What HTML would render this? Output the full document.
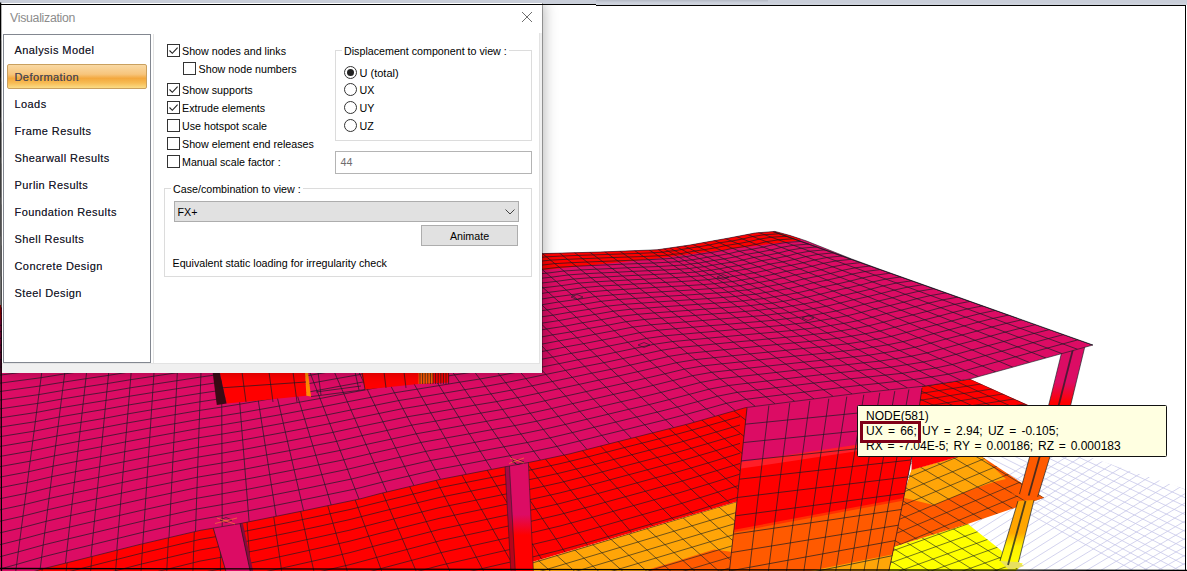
<!DOCTYPE html>
<html lang="en"><head><meta charset="utf-8"><title>Visualization</title>
<style>
html,body{margin:0;padding:0}
body{width:1187px;height:571px;overflow:hidden;position:relative;background:#fff;font-family:"Liberation Sans",sans-serif;}
.abs{position:absolute}
#dlg{position:absolute;left:2px;top:3px;width:540px;height:370px;background:#fff;box-sizing:content-box;box-shadow:1px 0 0 rgba(0,0,0,.32),3px 0 12px rgba(0,0,0,.26);}
#dlg .client{position:absolute;left:0;top:30px;width:540px;height:340px;background:#f0f0f0}
#dlg .inner{position:absolute;left:0;top:0;width:537px;height:330px;background:#fff;border-right:1px solid #e3e3e3;border-bottom:1px solid #e3e3e3}
.title{position:absolute;left:8px;top:8px;font-size:12.3px;letter-spacing:-.28px;line-height:14px;color:#8c8c8c;white-space:pre}
.close{position:absolute;left:519px;top:8px}
.list{position:absolute;left:1px;top:31px;width:146px;height:327px;border:1px solid #828790;background:#fff}
.split{position:absolute;left:150.5px;top:1px;width:1px;height:329px;background:#e4e4e4}
.item{position:absolute;left:10.5px;font-size:11px;letter-spacing:.42px;color:#1a1a2a;white-space:pre;line-height:13px;text-shadow:0 0 .3px rgba(20,20,40,.55)}
.sel{position:absolute;left:3px;top:29px;width:137.5px;height:23px;border:1px solid #c9a05f;border-radius:2px;background:linear-gradient(#f9d9a4 0%,#f7c57c 40%,#f3a83e 58%,#f7bc55 78%,#fbdc86 100%)}
.lbl{position:absolute;margin-top:1px;margin-left:-1px;font-size:10.7px;line-height:13px;color:#000;white-space:pre}
.cb{position:absolute;width:11px;height:11px;border:1px solid #333;background:#fff}
.rb{position:absolute;width:11px;height:11px;border:1px solid #333;border-radius:50%;background:#fff}
.grp{position:absolute;border:1px solid #dcdcdc}
.grp .cap{position:absolute;top:-6px;background:#fff;padding:0 2px;font-size:10.7px;line-height:13px;white-space:pre}
#tip{position:absolute;left:857px;top:405px;width:308px;height:50px;background:#ffffe1;border:1px solid #111;border-radius:1.5px;font-size:12px;line-height:15.3px;color:#000;white-space:pre;word-spacing:1.5px}
#tip div{position:absolute;left:8px}
#hl{position:absolute;left:860px;top:421px;width:55px;height:15.5px;border:3px solid #800018}
</style></head>
<body>
<svg width="1187" height="571" viewBox="0 0 1187 571" style="position:absolute;left:0;top:0"><defs><clipPath id="c1"><polygon points="880.0,387.5 1089.5,457.3 1187.0,489.8 1187.0,575.0 880.0,575.0"/></clipPath><clipPath id="c2"><polygon points="885.0,575.0 893.8,546.7 967.5,523.8 1001.0,550.3 1006.0,560.0 1022.8,563.6 1012.0,575.0"/></clipPath><clipPath id="c3"><polygon points="911.5,470.0 961.0,456.0 981.0,456.0 1044.0,497.8 968.3,523.8 893.8,546.7 903.0,497.0 912.0,456.0"/></clipPath><clipPath id="c4"><polygon points="915.0,387.0 970.0,379.0 1028.0,405.0 1040.0,412.0 910.0,412.0"/></clipPath><clipPath id="c5"><polygon points="500.0,575.0 532.0,562.0 737.0,501.6 755.0,490.0 745.0,575.0"/></clipPath><clipPath id="c6"><polygon points="-5.0,575.0 -5.0,400.0 760.0,400.0 752.0,501.6 737.0,501.6 532.0,562.0 500.0,575.0"/></clipPath><linearGradient id="gc2" x1="0" y1="0" x2="0" y2="1"><stop offset="0" stop-color="#dc0c64"/><stop offset="0.47" stop-color="#dc0c64"/><stop offset="0.65" stop-color="#ff0000"/><stop offset="1" stop-color="#ff0000"/></linearGradient><clipPath id="cwall"><polygon points="747.0,408.0 749.0,392.0 923.0,374.0 922.0,388.0 912.0,456.0 893.8,547.8 888.0,575.0 729.0,575.0"/></clipPath><linearGradient id="gcr1" x1="0" y1="0" x2="0" y2="1"><stop offset="0" stop-color="#dc0c64"/><stop offset="0.55" stop-color="#dc0c64"/><stop offset="0.85" stop-color="#ff0000"/><stop offset="1" stop-color="#ff0000"/></linearGradient><linearGradient id="gcr3" x1="0" y1="0" x2="0" y2="1"><stop offset="0" stop-color="#ffa000"/><stop offset="0.5" stop-color="#ffa800"/><stop offset="0.7" stop-color="#fff000"/><stop offset="1" stop-color="#ffff00"/></linearGradient><clipPath id="c7"><polygon points="-60.0,314.0 543.0,253.6 600.0,252.0 657.0,249.8 690.0,245.0 729.0,238.0 755.0,233.0 775.0,231.4 790.0,235.5 806.0,240.8 851.7,259.0 880.0,269.3 1093.0,345.0 970.0,379.0 935.0,384.5 925.0,386.0 860.0,393.0 745.7,407.6 688.0,424.0 614.0,442.6 570.0,453.8 540.0,460.2 528.0,462.6 505.0,466.8 470.0,473.6 440.0,479.4 380.0,493.6 360.0,498.9 300.0,511.5 240.0,523.6 200.0,530.4 140.0,544.4 80.0,559.5 44.0,568.5 -5.0,583.0 -60.0,598.0"/></clipPath><clipPath id="c8"><polygon points="-60.0,314.0 543.0,253.6 600.0,252.0 657.0,249.8 690.0,245.0 729.0,238.0 755.0,233.0 775.0,231.4 790.0,235.5 806.0,240.8 851.7,259.0 880.0,269.3 1093.0,345.0 970.0,379.0 935.0,384.5 925.0,386.0 860.0,393.0 745.7,407.6 688.0,424.0 614.0,442.6 570.0,453.8 540.0,460.2 528.0,462.6 505.0,466.8 470.0,473.6 440.0,479.4 380.0,493.6 360.0,498.9 300.0,511.5 240.0,523.6 200.0,530.4 140.0,544.4 80.0,559.5 44.0,568.5 -5.0,583.0 -60.0,598.0"/></clipPath></defs><rect width="1187" height="571" fill="#fff"/><g clip-path="url(#c1)"><path d="M880.0 255.8L1190.0 356.5M880.0 261.9L1190.0 365.0M880.0 268.0L1190.0 373.4M880.0 274.1L1190.0 381.8M880.0 280.2L1190.0 390.3M880.0 286.3L1190.0 398.7M880.0 292.5L1190.0 407.2M880.0 298.6L1190.0 415.6M880.0 304.7L1190.0 424.0M880.0 310.8L1190.0 432.5M880.0 316.9L1190.0 440.9M880.0 323.0L1190.0 449.3M880.0 329.1L1190.0 457.8M880.0 335.2L1190.0 466.2M880.0 341.4L1190.0 474.6M880.0 347.5L1190.0 483.1M880.0 353.6L1190.0 491.5M880.0 359.7L1190.0 500.0M880.0 365.8L1190.0 508.4M880.0 371.9L1190.0 516.8M880.0 378.0L1190.0 525.3M880.0 384.1L1190.0 533.7M880.0 390.3L1190.0 542.2M880.0 396.4L1190.0 550.6M880.0 402.5L1190.0 559.0M880.0 408.6L1190.0 567.5M880.0 414.7L1190.0 575.9M880.0 420.8L1190.0 584.3M880.0 426.9L1190.0 592.8M880.0 433.0L1190.0 601.2M860.0 569.0L1160.0 380.0M860.0 569.0L844.1 579.0M874.3 569.0L1174.3 380.0M874.3 569.0L858.4 579.0M888.6 569.0L1188.6 380.0M888.6 569.0L872.7 579.0M902.9 569.0L1202.9 380.0M902.9 569.0L887.0 579.0M917.2 569.0L1217.2 380.0M917.2 569.0L901.3 579.0M931.5 569.0L1231.5 380.0M931.5 569.0L915.6 579.0M945.8 569.0L1245.8 380.0M945.8 569.0L929.9 579.0M960.1 569.0L1260.1 380.0M960.1 569.0L944.2 579.0M974.4 569.0L1274.4 380.0M974.4 569.0L958.5 579.0M988.7 569.0L1288.7 380.0M988.7 569.0L972.8 579.0M1003.0 569.0L1303.6 380.0M1003.0 569.0L987.1 579.0M1017.3 569.0L1320.9 380.0M1017.3 569.0L1001.2 579.0M1031.6 569.0L1338.3 380.0M1031.6 569.0L1015.4 579.0M1045.9 569.0L1355.7 380.0M1045.9 569.0L1029.5 579.0M1060.2 569.0L1373.2 380.0M1060.2 569.0L1043.6 579.0M1074.5 569.0L1390.7 380.0M1074.5 569.0L1057.8 579.0M1088.8 569.0L1408.3 380.0M1088.8 569.0L1071.9 579.0M1103.1 569.0L1426.0 380.0M1103.1 569.0L1086.0 579.0M1117.4 569.0L1443.8 380.0M1117.4 569.0L1100.1 579.0M1131.7 569.0L1461.6 380.0M1131.7 569.0L1114.2 579.0M1146.0 569.0L1479.5 380.0M1146.0 569.0L1128.4 579.0M1160.3 569.0L1497.5 380.0M1160.3 569.0L1142.5 579.0M1174.6 569.0L1515.5 380.0M1174.6 569.0L1156.6 579.0M1188.9 569.0L1533.7 380.0M1188.9 569.0L1170.7 579.0M1203.2 569.0L1551.9 380.0M1203.2 569.0L1184.7 579.0M1217.5 569.0L1570.3 380.0M1217.5 569.0L1198.8 579.0M1231.8 569.0L1588.7 380.0M1231.8 569.0L1212.9 579.0M1246.1 569.0L1607.2 380.0M1246.1 569.0L1227.0 579.0M1260.4 569.0L1625.9 380.0M1260.4 569.0L1241.1 579.0M1274.7 569.0L1644.6 380.0M1274.7 569.0L1255.1 579.0M1289.0 569.0L1663.4 380.0M1289.0 569.0L1269.2 579.0M1303.3 569.0L1681.3 380.0M1303.3 569.0L1283.3 579.0M1317.6 569.0L1695.6 380.0M1317.6 569.0L1297.6 579.0M1331.9 569.0L1709.9 380.0M1331.9 569.0L1311.9 579.0M1346.2 569.0L1724.2 380.0M1346.2 569.0L1326.2 579.0M1360.5 569.0L1738.5 380.0M1360.5 569.0L1340.5 579.0M1374.8 569.0L1752.8 380.0M1374.8 569.0L1354.8 579.0M1389.1 569.0L1767.1 380.0M1389.1 569.0L1369.1 579.0M1403.4 569.0L1781.4 380.0M1403.4 569.0L1383.4 579.0M1417.7 569.0L1795.7 380.0M1417.7 569.0L1397.7 579.0M1432.0 569.0L1810.0 380.0M1432.0 569.0L1412.0 579.0M1446.3 569.0L1824.3 380.0M1446.3 569.0L1426.3 579.0M1460.6 569.0L1838.6 380.0M1460.6 569.0L1440.6 579.0M1474.9 569.0L1852.9 380.0M1474.9 569.0L1454.9 579.0M1489.2 569.0L1867.2 380.0M1489.2 569.0L1469.2 579.0" fill="none" stroke="#c8c8ea" stroke-width="1" stroke-opacity="0.8" /></g><polygon points="885.0,575.0 893.8,546.7 967.5,523.8 1001.0,550.3 1006.0,560.0 1022.8,563.6 1012.0,575.0" fill="#ffff00" /><g clip-path="url(#c2)"><path d="M1371.8 220.5L242.2 625.5M1383.3 227.7L253.7 632.7M1394.8 234.9L265.2 639.9M1406.3 242.1L276.7 647.1M1417.8 249.3L288.2 654.3M1429.3 256.5L299.7 661.5M1440.8 263.7L311.2 668.7M1452.3 270.9L322.7 675.9M1463.8 278.1L334.2 683.1M1475.3 285.3L345.7 690.3M1486.8 292.5L357.2 697.5M1498.3 299.7L368.7 704.7M1509.8 306.9L380.2 711.9M1521.3 314.1L391.7 719.1M1532.8 321.3L403.2 726.3M1544.3 328.5L414.7 733.5M1555.8 335.7L426.2 740.7M1567.3 342.9L437.7 747.9M1578.8 350.1L449.2 755.1M1590.3 357.3L460.7 762.3M1601.8 364.5L472.2 769.5M1613.3 371.7L483.7 776.7M1624.8 378.9L495.2 783.9M1636.3 386.1L506.7 791.1M1647.8 393.3L518.2 798.3M1659.3 400.5L529.7 805.5M1670.8 407.7L541.2 812.7M1682.3 414.9L552.7 819.9M1693.8 422.1L564.2 827.1M662.4 132.6L1679.6 769.4M647.9 137.8L1665.1 774.6M633.4 143.0L1650.6 779.8M618.9 148.2L1636.1 785.0M604.4 153.4L1621.6 790.2M589.9 158.6L1607.1 795.4M575.4 163.8L1592.6 800.6M560.9 169.0L1578.1 805.8M546.4 174.2L1563.6 811.0M531.9 179.4L1549.1 816.2M517.4 184.6L1534.6 821.4M502.9 189.8L1520.1 826.6M488.4 195.0L1505.6 831.8M473.9 200.2L1491.1 837.0M459.4 205.4L1476.6 842.2M444.9 210.6L1462.1 847.4M430.4 215.8L1447.6 852.6M415.9 221.0L1433.1 857.8M401.4 226.2L1418.6 863.0M386.9 231.4L1404.1 868.2M372.4 236.6L1389.6 873.4M357.9 241.8L1375.1 878.6M343.4 247.0L1360.6 883.8M328.9 252.2L1346.1 889.0M314.4 257.4L1331.6 894.2M299.9 262.6L1317.1 899.4M285.4 267.8L1302.6 904.6M270.9 273.0L1288.1 909.8M256.4 278.2L1273.6 915.0" fill="none" stroke="#121e24" stroke-width="0.85" stroke-opacity="0.7" /></g><polygon points="911.5,470.0 961.0,456.0 981.0,456.0 1044.0,497.8 968.3,523.8 893.8,546.7 903.0,497.0" fill="#ff5a00" /><polygon points="911.5,470.0 961.0,456.0 981.0,456.0 1006.0,478.9 993.5,482.0 968.3,490.7 933.6,505.0 903.6,497.8" fill="#ffa508" /><polygon points="912.0,456.0 961.0,456.0 911.5,470.0" fill="#ff0000" /><g clip-path="url(#c3)"><path d="M1773.4 374.8L664.6 833.6M1760.9 367.2L652.1 826.0M1748.4 359.6L639.6 818.4M1735.9 352.0L627.1 810.8M1723.4 344.4L614.6 803.2M1710.9 336.8L602.1 795.6M1698.4 329.2L589.6 788.0M1685.9 321.6L577.1 780.4M1673.4 314.0L564.6 772.8M1660.9 306.4L552.1 765.2M1648.4 298.8L539.6 757.6M1635.9 291.2L527.1 750.0M1623.4 283.6L514.6 742.4M1610.9 276.0L502.1 734.8M1598.4 268.4L489.6 727.2M1585.9 260.8L477.1 719.6M1573.4 253.2L464.6 712.0M1560.9 245.6L452.1 704.4M1548.4 238.0L439.6 696.8M1535.9 230.4L427.1 689.2M1523.4 222.8L414.6 681.6M1510.9 215.2L402.1 674.0M1498.4 207.6L389.6 666.4M1485.9 200.0L377.1 658.8M1473.4 192.4L364.6 651.2M1460.9 184.8L352.1 643.6M1448.4 177.2L339.6 636.0M1435.9 169.6L327.1 628.4M1423.4 162.0L314.6 620.8M1759.7 725.5L734.3 102.1M1745.2 731.5L719.8 108.1M1730.7 737.5L705.3 114.1M1716.2 743.5L690.8 120.1M1701.7 749.5L676.3 126.1M1687.2 755.5L661.8 132.1M1672.7 761.5L647.3 138.1M1658.2 767.5L632.8 144.1M1643.7 773.5L618.3 150.1M1629.2 779.5L603.8 156.1M1614.7 785.5L589.3 162.1M1600.2 791.5L574.8 168.1M1585.7 797.5L560.3 174.1M1571.2 803.5L545.8 180.1M1556.7 809.5L531.3 186.1M1542.2 815.5L516.8 192.1M1527.7 821.5L502.3 198.1M1513.2 827.5L487.8 204.1M1498.7 833.5L473.3 210.1M1484.2 839.5L458.8 216.1M1469.7 845.5L444.3 222.1M1455.2 851.5L429.8 228.1M1440.7 857.5L415.3 234.1M1426.2 863.5L400.8 240.1M1411.7 869.5L386.3 246.1M1397.2 875.5L371.8 252.1M1382.7 881.5L357.3 258.1M1368.2 887.5L342.8 264.1M1353.7 893.5L328.3 270.1" fill="none" stroke="#121e24" stroke-width="0.85" stroke-opacity="0.7" /></g><polygon points="915.0,387.0 970.0,379.0 1028.0,405.0 1040.0,412.0 910.0,412.0" fill="#ff0000" /><g clip-path="url(#c4)"><path d="M1452.7 235.9L267.3 422.1M1463.7 240.9L278.3 427.1M1474.7 245.9L289.3 432.1M1485.7 250.9L300.3 437.1M1496.7 255.9L311.3 442.1M1507.7 260.9L322.3 447.1M1518.7 265.9L333.3 452.1M1529.7 270.9L344.3 457.1M1540.7 275.9L355.3 462.1M1551.7 280.9L366.3 467.1M1562.7 285.9L377.3 472.1M1573.7 290.9L388.3 477.1M1584.7 295.9L399.3 482.1M1595.7 300.9L410.3 487.1M1606.7 305.9L421.3 492.1M1617.7 310.9L432.3 497.1M1628.7 315.9L443.3 502.1M1639.7 320.9L454.3 507.1M1650.7 325.9L465.3 512.1M1661.7 330.9L476.3 517.1M1672.7 335.9L487.3 522.1M563.8 108.7L1656.2 605.3M549.8 110.9L1642.2 607.5M535.8 113.1L1628.2 609.7M521.8 115.3L1614.2 611.9M507.8 117.5L1600.2 614.1M493.8 119.7L1586.2 616.3M479.8 121.9L1572.2 618.5M465.8 124.1L1558.2 620.7M451.8 126.3L1544.2 622.9M437.8 128.5L1530.2 625.1M423.8 130.7L1516.2 627.3M409.8 132.9L1502.2 629.5M395.8 135.1L1488.2 631.7M381.8 137.3L1474.2 633.9M367.8 139.5L1460.2 636.1M353.8 141.7L1446.2 638.3M339.8 143.9L1432.2 640.5M325.8 146.1L1418.2 642.7M311.8 148.3L1404.2 644.9M297.8 150.5L1390.2 647.1M283.8 152.7L1376.2 649.3" fill="none" stroke="#121e24" stroke-width="0.85" stroke-opacity="0.7" /></g><polygon points="500.0,575.0 532.0,562.0 737.0,501.6 755.0,490.0 745.0,575.0" fill="#ffa508" /><polygon points="645.0,575.0 650.0,569.0 678.0,560.8 714.0,549.6 738.0,552.7 738.0,575.0" fill="#ff5a00" /><g clip-path="url(#c5)"><path d="M1527.7 521.2L378.3 866.0M1518.7 513.2L369.3 858.0M1509.7 505.2L360.3 850.0M1500.7 497.2L351.3 842.0M1491.7 489.2L342.3 834.0M1482.7 481.2L333.3 826.0M1473.7 473.2L324.3 818.0M1464.7 465.2L315.3 810.0M1455.7 457.2L306.3 802.0M1446.7 449.2L297.3 794.0M1437.7 441.2L288.3 786.0M1428.7 433.2L279.3 778.0M1419.7 425.2L270.3 770.0M1410.7 417.2L261.3 762.0M1401.7 409.2L252.3 754.0M1392.7 401.2L243.3 746.0M1383.7 393.2L234.3 738.0M1374.7 385.2L225.3 730.0M1365.7 377.2L216.3 722.0M1356.7 369.2L207.3 714.0M1347.7 361.2L198.3 706.0M1338.7 353.2L189.3 698.0M1329.7 345.2L180.3 690.0M1320.7 337.2L171.3 682.0M1311.7 329.2L162.3 674.0M1302.7 321.2L153.3 666.0M1293.7 313.2L144.3 658.0M1284.7 305.2L135.3 650.0M1275.7 297.2L126.3 642.0M1266.7 289.2L117.3 634.0M1257.7 281.2L108.3 626.0M1248.7 273.2L99.3 618.0M1239.7 265.2L90.3 610.0M1230.7 257.2L81.3 602.0M1221.7 249.2L72.3 594.0M1212.7 241.2L63.3 586.0M1203.7 233.2L54.3 578.0M1194.7 225.2L45.3 570.0M1185.7 217.2L36.3 562.0M1176.7 209.2L27.3 554.0M1167.7 201.2L18.3 546.0M1158.7 193.2L9.3 538.0M1149.7 185.2L0.3 530.0M1140.7 177.2L-8.7 522.0M1131.7 169.2L-17.7 514.0M1122.7 161.2L-26.7 506.0M1113.7 153.2L-35.7 498.0M1104.7 145.2L-44.7 490.0M1095.7 137.2L-53.7 482.0M1473.4 813.8L576.6 16.6M1455.4 819.2L558.6 22.0M1437.4 824.6L540.6 27.4M1419.4 830.0L522.6 32.8M1401.4 835.4L504.6 38.2M1383.4 840.8L486.6 43.6M1365.4 846.2L468.6 49.0M1347.4 851.6L450.6 54.4M1329.4 857.0L432.6 59.8M1311.4 862.4L414.6 65.2M1293.4 867.8L396.6 70.6M1275.4 873.2L378.6 76.0M1257.4 878.6L360.6 81.4M1239.4 884.0L342.6 86.8M1221.4 889.4L324.6 92.2M1203.4 894.8L306.6 97.6M1185.4 900.2L288.6 103.0M1167.4 905.6L270.6 108.4M1149.4 911.0L252.6 113.8M1131.4 916.4L234.6 119.2M1113.4 921.8L216.6 124.6M1095.4 927.2L198.6 130.0M1077.4 932.6L180.6 135.4M1059.4 938.0L162.6 140.8M1041.4 943.4L144.6 146.2M1023.4 948.8L126.6 151.6M1005.4 954.2L108.6 157.0M987.4 959.6L90.6 162.4M969.4 965.0L72.6 167.8M951.4 970.4L54.6 173.2M933.4 975.8L36.6 178.6M915.4 981.2L18.6 184.0M897.4 986.6L0.6 189.4" fill="none" stroke="#121e24" stroke-width="0.85" stroke-opacity="0.72" /></g><polygon points="-5.0,575.0 -5.0,400.0 760.0,400.0 752.0,501.6 737.0,501.6 532.0,562.0 500.0,575.0" fill="#ff0000" /><g clip-path="url(#c6)"><path d="M-31.0 587.1L-39.1 787.1M-6.5 580.4L-16.4 780.4M18.0 573.2L-9.7 773.2M42.6 565.9L17.8 765.9M67.4 559.7L45.4 759.7M92.3 553.4L73.4 753.4M117.5 547.1L101.5 747.1M143.0 540.7L129.9 740.7M168.6 534.7L158.5 734.7M194.4 528.7L187.4 728.7M220.5 523.9L220.2 723.9M246.8 519.2L261.3 719.2M273.3 513.9L302.6 713.9M300.0 508.5L344.3 708.5M326.9 502.8L386.4 702.8M354.1 497.1L428.8 697.1M381.5 490.2L467.1 690.2M408.4 483.9L503.6 683.9M434.7 477.6L539.2 677.6M460.4 472.4L574.0 672.4M485.6 467.6L608.0 667.6M505.2 463.8L640.6 663.8M524.5 460.2L673.0 660.2M543.4 456.5L704.8 656.5M562.0 452.5L736.1 652.5M580.2 448.2L766.7 648.2M598.1 443.6L796.8 643.6M615.7 439.2L822.2 639.2M633.0 434.8L846.6 634.8M649.9 430.6L870.5 630.6M666.5 426.4L894.0 626.4M682.9 422.3L917.2 622.3M699.2 417.8L940.2 617.8M715.3 413.2L963.0 613.2M731.2 408.7L985.5 608.7M747.0 404.4L1007.9 604.4M762.7 402.4L1030.1 602.4M-10.0 594.0L20.0 585.1L50.0 576.4L80.0 568.8L110.0 561.2L140.0 553.6L170.0 546.5L200.0 539.4L230.0 534.2L260.0 528.3L290.0 522.2L320.0 515.9L350.0 509.5L380.0 502.0L410.0 494.8L440.0 487.6L470.0 481.7L500.0 475.8L530.0 470.1L560.0 463.7L590.0 456.4L620.0 448.7L650.0 441.1L680.0 433.4L710.0 425.1L740.0 416.5M-10.0 605.4L20.0 596.5L50.0 587.6L80.0 579.9L110.0 572.2L140.0 564.4L170.0 557.2L200.0 550.0L230.0 544.7L260.0 538.7L290.0 532.5L320.0 526.1L350.0 519.5L380.0 511.9L410.0 504.6L440.0 497.3L470.0 491.3L500.0 485.3L530.0 479.5L560.0 473.0L590.0 465.6L620.0 457.8L650.0 450.0L680.0 442.3L710.0 433.8L740.0 425.0M-10.0 617.4L20.0 608.3L50.0 599.4L80.0 591.6L110.0 583.7L140.0 575.8L170.0 568.5L200.0 561.1L230.0 555.7L260.0 549.7L290.0 543.3L320.0 536.7L350.0 530.1L380.0 522.4L410.0 514.9L440.0 507.5L470.0 501.4L500.0 495.2L530.0 489.3L560.0 482.7L590.0 475.2L620.0 467.2L650.0 459.4L680.0 451.5L710.0 442.9L740.0 434.0M-10.0 629.9L20.0 620.7L50.0 611.7L80.0 603.7L110.0 595.7L140.0 587.7L170.0 580.2L200.0 572.8L230.0 567.2L260.0 561.1L290.0 554.5L320.0 547.9L350.0 541.1L380.0 533.3L410.0 525.7L440.0 518.2L470.0 511.9L500.0 505.6L530.0 499.6L560.0 492.9L590.0 485.2L620.0 477.1L650.0 469.1L680.0 461.1L710.0 452.4L740.0 443.4M-10.0 643.0L20.0 633.7L50.0 624.5L80.0 616.4L110.0 608.2L140.0 600.1L170.0 592.5L200.0 584.9L230.0 579.3L260.0 572.9L290.0 566.3L320.0 559.5L350.0 552.6L380.0 544.6L410.0 537.0L440.0 529.3L470.0 522.9L500.0 516.5L530.0 510.3L560.0 503.5L590.0 495.7L620.0 487.5L650.0 479.3L680.0 471.2L710.0 462.4L740.0 453.2M-10.0 656.6L20.0 647.1L50.0 637.8L80.0 629.6L110.0 621.3L140.0 613.0L170.0 605.3L200.0 597.6L230.0 591.8L260.0 585.3L290.0 578.6L320.0 571.6L350.0 564.6L380.0 556.5L410.0 548.7L440.0 540.8L470.0 534.3L500.0 527.8L530.0 521.5L560.0 514.5L590.0 506.5L620.0 498.2L650.0 490.0L680.0 481.7L710.0 472.7L740.0 463.5M-10.0 670.8L20.0 661.1L50.0 651.7L80.0 643.3L110.0 634.9L140.0 626.5L170.0 618.6L200.0 610.8L230.0 604.8L260.0 598.2L290.0 591.3L320.0 584.2L350.0 577.1L380.0 568.8L410.0 560.8L440.0 552.9L470.0 546.2L500.0 539.5L530.0 533.1L560.0 526.0L590.0 517.9L620.0 509.4L650.0 501.0L680.0 492.6L710.0 483.5L740.0 474.1M-10.0 685.4L20.0 675.7L50.0 666.1L80.0 657.6L110.0 649.0L140.0 640.4L170.0 632.4L200.0 624.4L230.0 618.3L260.0 611.6L290.0 604.5L320.0 597.3L350.0 590.0L380.0 581.6L410.0 573.5L440.0 565.4L470.0 558.6L500.0 551.7L530.0 545.1L560.0 537.9L590.0 529.6L620.0 521.0L650.0 512.5L680.0 503.9L710.0 494.6L740.0 485.1M-10.0 700.7L20.0 690.7L50.0 681.0L80.0 672.3L110.0 663.6L140.0 654.9L170.0 646.8L200.0 638.6L230.0 632.3L260.0 625.4L290.0 618.2L320.0 610.9L350.0 603.4L380.0 594.8L410.0 586.6L440.0 578.3L470.0 571.4L500.0 564.4L530.0 557.6L560.0 550.2L590.0 541.8L620.0 533.1L650.0 524.4L680.0 515.7L710.0 506.2L740.0 496.5M-10.0 716.4L20.0 706.4L50.0 696.4L80.0 687.6L110.0 678.8L140.0 669.9L170.0 661.6L200.0 653.3L230.0 646.8L260.0 639.8L290.0 632.4L320.0 624.9L350.0 617.3L380.0 608.6L410.0 600.1L440.0 591.7L470.0 584.6L500.0 577.5L530.0 570.6L560.0 563.0L590.0 554.5L620.0 545.5L650.0 536.7L680.0 527.8L710.0 518.2L740.0 508.4M-10.0 732.8L20.0 722.5L50.0 712.4L80.0 703.5L110.0 694.4L140.0 685.4L170.0 676.9L200.0 668.4L230.0 661.9L260.0 654.6L290.0 647.1L320.0 639.4L350.0 631.6L380.0 622.8L410.0 614.2L440.0 605.6L470.0 598.3L500.0 591.0L530.0 584.0L560.0 576.2L590.0 567.5L620.0 558.4L650.0 549.4L680.0 540.4L710.0 530.6L740.0 520.6M-10.0 749.6L20.0 739.2L50.0 729.0L80.0 719.8L110.0 710.6L140.0 701.4L170.0 692.8L200.0 684.1L230.0 677.4L260.0 670.0L290.0 662.3L320.0 654.4L350.0 646.5L380.0 637.4L410.0 628.7L440.0 619.9L470.0 612.5L500.0 605.0L530.0 597.8L560.0 589.9L590.0 581.0L620.0 571.8L650.0 562.6L680.0 553.4L710.0 543.5L740.0 533.3M-10.0 767.0L20.0 756.4L50.0 746.0L80.0 736.7L110.0 727.3L140.0 717.9L170.0 709.1L200.0 700.3L230.0 693.4L260.0 685.8L290.0 678.0L320.0 669.9L350.0 661.8L380.0 652.6L410.0 643.7L440.0 634.7L470.0 627.1L500.0 619.5L530.0 612.1L560.0 604.0L590.0 594.9L620.0 585.5L650.0 576.1L680.0 566.8L710.0 556.7L740.0 546.4M-10.0 785.0L20.0 774.2L50.0 763.6L80.0 754.1L110.0 744.5L140.0 735.0L170.0 726.0L200.0 717.0L230.0 709.9L260.0 702.2L290.0 694.1L320.0 685.9L350.0 677.6L380.0 668.2L410.0 659.1L440.0 650.0L470.0 642.2L500.0 634.4L530.0 626.8L560.0 618.5L590.0 609.3L620.0 599.7L650.0 590.2L680.0 580.6L710.0 570.4L740.0 559.8M-10.0 803.4L20.0 792.5L50.0 781.7L80.0 772.0L110.0 762.3L140.0 752.6L170.0 743.4L200.0 734.2L230.0 726.9L260.0 719.0L290.0 710.8L320.0 702.4L350.0 693.9L380.0 684.3L410.0 675.0L440.0 665.7L470.0 657.7L500.0 649.7L530.0 642.0L560.0 633.5L590.0 624.1L620.0 614.3L650.0 604.6L680.0 594.9L710.0 584.4L740.0 573.7M-10.0 822.5L20.0 811.3L50.0 800.3L80.0 790.5L110.0 780.5L140.0 770.6L170.0 761.3L200.0 751.9L230.0 744.4L260.0 736.3L290.0 727.9L320.0 719.3L350.0 710.6L380.0 700.8L410.0 691.4L440.0 681.9L470.0 673.7L500.0 665.5L530.0 657.6L560.0 648.9L590.0 639.3L620.0 629.3L650.0 619.4L680.0 609.5L710.0 598.9L740.0 588.0" fill="none" stroke="#121e24" stroke-width="0.85" stroke-opacity="0.75" /></g><polygon points="212.0,524.0 239.5,521.0 251.0,575.0 227.0,575.0" fill="#dc0c64" /><polygon points="239.5,521.0 243.0,524.0 254.0,575.0 251.0,575.0" fill="#8a0a3c" /><path d="M212.0 524.0L227.0 575.0M239.5 521.0L251.0 575.0" fill="none" stroke="#121e24" stroke-width="0.85" stroke-opacity="0.8" /><polygon points="505.0,466.0 528.3,461.0 533.6,575.0 511.0,575.0" fill="url(#gc2)" /><polygon points="505.0,466.0 509.4,465.0 515.5,575.0 511.0,575.0" fill="#7a0830" fill-opacity="0.55"/><path d="M505.0 466.0L511.0 575.0M528.3 461.0L533.6 575.0M509.4 465.0L515.5 575.0" fill="none" stroke="#121e24" stroke-width="0.85" stroke-opacity="0.6" /><g clip-path="url(#cwall)"><polygon points="747.0,408.0 749.0,392.0 923.0,374.0 922.0,388.0 912.0,456.0 893.8,547.8 888.0,575.0 729.0,575.0" fill="#dc0c64" /><polygon points="725.0,464.5 925.0,434.5 925.0,600.0 725.0,600.0" fill="#ff1e28" /><polygon points="725.0,471.0 925.0,441.0 925.0,600.0 725.0,600.0" fill="#ff0000" /><polygon points="725.0,531.5 925.0,494.0 925.0,600.0 725.0,600.0" fill="#ff3000" /><polygon points="725.0,534.0 925.0,496.5 925.0,600.0 725.0,600.0" fill="#ff5a00" /><polygon points="725.0,588.0 925.0,548.0 925.0,600.0 725.0,600.0" fill="#ffa508" /><path d="M768.9 405.5L748.9 575.0M789.8 403.1L767.9 575.0M809.8 400.8L786.0 575.0M828.8 398.7L803.3 575.0M846.8 396.6L819.6 575.0M863.8 394.7L835.1 575.0M879.8 392.8L849.6 575.0M894.8 391.1L863.3 575.0M908.9 389.5L876.1 575.0M725.0 426.2L925.0 406.4M725.0 444.4L925.0 424.2M725.0 462.6L925.0 441.6M725.0 480.8L925.0 458.4M725.0 499.0L925.0 474.8M725.0 517.2L925.0 490.6M725.0 535.4L925.0 506.0M725.0 553.6L925.0 520.8M725.0 571.8L925.0 535.1M725.0 590.0L925.0 549.0" fill="none" stroke="#121e24" stroke-width="0.85" stroke-opacity="0.8" /></g><path d="M747.0 408.0L729.0 575.0M922.0 388.0L912.0 456.0L893.8 547.8L888.0 575.0" fill="none" stroke="#121e24" stroke-width="0.85" stroke-opacity="0.8" /><polygon points="1062.0,351.0 1085.0,346.0 1069.0,412.0 1047.0,412.0" fill="url(#gcr1)" /><path d="M1062.0 351.0L1047.0 412.0M1085.0 346.0L1069.0 412.0" fill="none" stroke="#121e24" stroke-width="0.85" stroke-opacity="0.75" /><path d="M1073.0 349.0L1057.0 412.0" fill="none" stroke="#121e24" stroke-width="1.8" stroke-opacity="0.7" /><polygon points="1031.5,450.0 1052.0,450.0 1037.6,497.0 1028.0,500.0 1019.5,494.0" fill="#ff5a00" /><path d="M1031.5 450.0L1019.5 494.0M1052.0 450.0L1037.6 497.0" fill="none" stroke="#121e24" stroke-width="0.85" stroke-opacity="0.8" /><path d="M1041.5 450.0L1028.0 498.0" fill="none" stroke="#121e24" stroke-width="1.8" stroke-opacity="0.75" /><polygon points="1010.0,493.0 1044.0,497.8 1028.0,500.0" fill="#ff5a00" /><polygon points="1018.0,501.0 1034.0,500.0 1018.5,562.0 1009.0,566.0 1000.0,561.0" fill="url(#gcr3)" /><polygon points="1000.0,561.0 1018.5,562.0 1024.0,566.0 1009.0,570.0" fill="#e8e060" /><path d="M1018.0 501.0L1000.0 561.0M1034.0 500.0L1018.5 562.0" fill="none" stroke="#121e24" stroke-width="0.85" stroke-opacity="0.8" /><path d="M1025.5 501.0L1008.0 565.0" fill="none" stroke="#121e24" stroke-width="1.8" stroke-opacity="0.75" /><polygon points="-60.0,314.0 543.0,253.6 600.0,252.0 657.0,249.8 690.0,245.0 729.0,238.0 755.0,233.0 775.0,231.4 790.0,235.5 806.0,240.8 851.7,259.0 880.0,269.3 1093.0,345.0 970.0,379.0 935.0,384.5 925.0,386.0 860.0,393.0 745.7,407.6 688.0,424.0 614.0,442.6 570.0,453.8 540.0,460.2 528.0,462.6 505.0,466.8 470.0,473.6 440.0,479.4 380.0,493.6 360.0,498.9 300.0,511.5 240.0,523.6 200.0,530.4 140.0,544.4 80.0,559.5 44.0,568.5 -5.0,583.0 -60.0,598.0" fill="#dc0c64" /><g clip-path="url(#c7)"><polygon points="-60.0,290.0 543.0,270.0 656.7,258.4 798.7,240.4 806.0,236.0 780.0,220.0 -60.0,220.0" fill="#ff0000" /></g><g clip-path="url(#c8)"><path d="M-60.0 598.0L-51.5 313.0M-35.0 591.2L-24.0 310.2M-10.0 584.4L3.3 307.4M15.0 577.1L50.9 302.6M40.1 569.6L73.9 300.1M65.5 563.1L94.8 298.1M91.0 556.7L116.0 296.2M116.8 550.2L137.5 293.7M142.8 543.7L159.3 291.7M169.0 537.6L181.5 289.6M195.5 531.5L203.9 287.5M222.2 526.6L221.3 285.6M249.1 521.8L230.4 284.8M276.2 516.3L240.2 283.8M303.6 510.8L250.7 282.8M331.2 505.0L262.1 281.5M359.0 499.1L274.2 280.1M386.8 492.0L293.4 278.5M413.9 485.6L312.5 276.6M440.5 479.3L331.3 274.3M466.3 474.3L349.8 272.8M491.6 469.4L367.3 270.9M516.3 464.7L381.9 269.2M540.4 460.1L397.0 268.1M564.0 455.1L412.2 266.6M587.0 449.5L428.0 265.0M609.5 443.8L443.9 263.3M631.4 438.2L460.0 261.7M652.9 432.8L475.6 259.8M673.8 427.6L492.0 258.6M694.5 422.1L508.0 256.6M715.0 416.3L525.4 255.3M735.3 410.6L542.5 253.6M755.3 406.4L559.3 252.9M775.1 403.8L574.2 252.3M794.7 401.3L589.2 251.8M814.0 398.9L604.3 251.4M833.2 396.4L619.4 250.9M852.1 394.0L634.5 250.5M870.8 391.8L648.9 249.8M889.2 389.9L658.1 249.4M907.5 387.9L663.4 248.4M925.6 385.9L669.7 247.9M943.4 383.2L676.2 246.7M961.1 380.4L683.1 245.4M978.5 376.7L692.3 244.2M995.7 371.9L703.2 242.4M1012.8 367.2L713.4 240.2M1029.5 362.5L725.2 238.5M1045.9 358.0L736.3 236.5M1061.9 353.6L746.3 234.1M1077.6 349.3L758.0 232.3M1092.9 345.0L772.9 231.5M1093.0 345.0L772.9 231.5M-59.6 584.8L-34.5 578.2L-9.4 571.6L16.7 564.4L41.7 557.2L66.8 550.9L92.2 544.7L117.8 538.4L143.6 532.1L169.6 526.2L195.9 520.2L222.1 515.5L248.2 510.8L274.5 505.6L301.1 500.2L328.0 494.6L355.1 489.0L382.5 482.1L409.3 475.9L435.4 469.8L461.0 465.0L485.9 460.2L510.1 455.7L533.8 451.2L557.0 446.4L579.7 440.9L601.8 435.4L623.5 430.1L644.7 424.8L665.4 419.8L685.9 414.5L706.3 408.9L726.4 403.3L746.3 399.3L765.8 396.8L785.2 394.4L804.3 392.1L823.3 389.7L842.0 387.4L860.5 385.3L878.6 383.4L896.2 381.4L913.7 379.5L931.1 376.9L948.2 374.2L965.3 370.5L982.2 365.9L999.0 361.3L1015.5 356.8L1031.6 352.4L1047.3 348.1L1062.8 343.9L1078.1 339.8L1078.2 339.8M-59.2 571.9L-34.0 565.5L-8.8 559.0L18.3 551.9L43.2 545.0L68.2 538.9L93.3 532.9L118.7 526.8L144.3 520.7L170.2 514.9L196.3 509.1L222.1 504.6L247.4 500.1L272.9 495.0L298.7 489.9L324.8 484.5L351.2 479.1L378.2 472.4L404.7 466.4L430.5 460.5L455.7 455.9L480.2 451.2L504.0 446.8L527.3 442.5L550.1 437.8L572.4 432.6L594.3 427.2L615.7 422.1L636.6 417.0L657.2 412.1L677.5 407.0L697.7 401.6L717.6 396.2L737.4 392.3L756.7 390.0L775.9 387.7L794.8 385.4L813.6 383.1L832.1 380.9L850.4 378.8L868.1 377.0L885.1 375.1L902.1 373.3L918.9 370.7L935.6 368.0L952.3 364.5L969.0 360.0L985.4 355.5L1001.7 351.2L1017.5 346.9L1033.0 342.7L1048.3 338.6L1063.6 334.6L1063.7 334.6M-58.8 559.2L-33.5 553.0L-8.2 546.7L19.9 539.7L44.7 533.0L69.5 527.1L94.4 521.3L119.6 515.4L145.1 509.5L170.7 503.9L196.6 498.3L222.0 493.9L246.5 489.5L271.3 484.7L296.4 479.7L321.8 474.6L347.5 469.3L374.1 463.0L400.1 457.1L425.6 451.4L450.5 446.9L474.7 442.4L498.0 438.1L520.9 434.0L543.4 429.4L565.4 424.4L587.0 419.2L608.1 414.2L628.8 409.3L649.1 404.6L669.2 399.6L689.2 394.4L709.1 389.2L728.7 385.5L747.8 383.2L766.7 381.0L785.5 378.8L804.1 376.6L822.5 374.5L840.6 372.5L857.8 370.7L874.3 368.9L890.8 367.1L907.1 364.6L923.3 362.0L939.6 358.6L956.0 354.3L972.1 349.9L988.1 345.7L1003.8 341.5L1019.0 337.3L1034.1 333.4L1049.4 329.6L1049.5 329.6M-58.5 546.8L-33.0 540.7L-7.6 534.6L21.5 527.8L46.2 521.3L70.7 515.5L95.5 509.9L120.5 504.2L145.8 498.5L171.3 493.1L197.0 487.6L222.0 483.4L245.7 479.2L269.7 474.6L294.1 469.8L318.8 464.8L343.8 459.8L370.0 453.7L395.7 448.0L420.8 442.5L445.4 438.1L469.3 433.8L492.2 429.6L514.7 425.6L536.7 421.2L558.5 416.3L579.7 411.3L600.6 406.5L621.0 401.8L641.2 397.2L661.0 392.4L681.0 387.4L700.7 382.4L720.1 378.8L739.0 376.6L757.8 374.5L776.4 372.4L794.8 370.3L813.0 368.2L830.9 366.3L847.7 364.6L863.7 362.8L879.6 361.1L895.4 358.7L911.1 356.2L927.1 352.9L943.2 348.6L959.0 344.4L974.9 340.3L990.3 336.2L1005.2 332.1L1020.2 328.3L1035.4 324.6L1035.5 324.6M-58.1 534.7L-32.6 528.7L-7.0 522.8L23.0 516.1L47.6 509.8L72.0 504.2L96.6 498.8L121.4 493.2L146.5 487.7L171.8 482.5L197.4 477.2L222.0 473.1L244.9 469.1L268.2 464.6L291.8 460.1L315.8 455.3L340.2 450.4L366.0 444.5L391.4 439.1L416.2 433.8L440.4 429.5L464.0 425.3L486.5 421.3L508.6 417.4L530.3 413.2L551.7 408.5L572.7 403.6L593.3 399.0L613.5 394.4L633.4 390.0L653.1 385.4L672.9 380.5L692.5 375.7L711.8 372.3L730.5 370.2L749.0 368.1L767.4 366.1L785.6 364.1L803.7 362.1L821.5 360.3L837.9 358.6L853.2 356.9L868.7 355.2L884.0 352.8L899.3 350.4L914.9 347.2L930.7 343.1L946.3 338.9L961.9 335.0L977.1 331.0L991.8 327.0L1006.6 323.3L1021.8 319.8L1021.9 319.8M-57.7 522.8L-32.1 517.0L-6.5 511.2L24.5 504.6L49.1 498.5L73.2 493.2L97.6 488.0L122.3 482.5L147.2 477.2L172.3 472.2L197.7 467.0L221.9 463.0L244.1 459.2L266.7 454.9L289.6 450.6L312.9 445.9L336.6 441.3L362.1 435.6L387.2 430.4L411.6 425.2L435.6 421.1L458.8 417.0L480.8 413.1L502.6 409.4L523.9 405.3L545.0 400.8L565.8 396.1L586.2 391.6L606.1 387.2L625.8 382.9L645.3 378.4L665.0 373.8L684.4 369.1L703.6 365.8L722.1 363.8L740.4 361.9L758.7 359.9L776.7 358.0L794.6 356.1L812.2 354.4L828.2 352.8L843.0 351.1L858.0 349.5L872.9 347.1L887.7 344.8L903.0 341.7L918.5 337.7L933.8 333.6L949.2 329.8L964.1 325.9L978.6 322.0L993.2 318.4L1008.4 315.1L1008.5 315.0M-57.4 511.1L-31.7 505.5L-5.9 499.9L26.0 493.4L50.4 487.5L74.4 482.3L98.6 477.3L123.1 472.0L147.8 466.9L172.8 462.0L198.1 457.1L221.9 453.2L243.4 449.5L265.2 445.4L287.5 441.2L310.1 436.8L333.2 432.3L358.3 426.9L383.0 421.8L407.2 416.8L430.8 412.9L453.7 408.9L475.3 405.1L496.7 401.6L517.7 397.6L538.5 393.2L559.0 388.7L579.1 384.4L598.8 380.1L618.4 376.0L637.7 371.7L657.2 367.2L676.5 362.7L695.5 359.6L713.9 357.7L732.0 355.8L750.1 353.9L768.0 352.1L785.7 350.3L803.1 348.5L818.8 347.0L833.1 345.4L847.5 343.8L862.0 341.6L876.3 339.2L891.3 336.3L906.5 332.4L921.5 328.5L936.7 324.7L951.5 321.0L965.7 317.2L980.1 313.6L995.3 310.4L995.4 310.4M-57.1 499.7L-31.2 494.3L-5.4 488.8L27.4 482.4L51.8 476.7L75.6 471.7L99.6 466.9L123.9 461.8L148.5 456.8L173.3 452.1L198.4 447.3L221.9 443.5L242.6 440.0L263.8 436.1L285.3 432.1L307.3 427.9L329.8 423.6L354.6 418.4L378.9 413.5L402.8 408.6L426.1 404.8L448.7 400.9L470.0 397.3L491.0 393.9L511.7 390.1L532.2 385.8L552.4 381.5L572.3 377.3L591.7 373.2L611.1 369.3L630.2 365.1L649.6 360.8L668.8 356.4L687.7 353.4L705.8 351.6L723.8 349.8L741.7 348.0L759.4 346.2L777.0 344.5L794.3 342.9L809.5 341.4L823.3 339.8L837.3 338.3L851.3 336.1L865.2 333.8L879.8 331.0L894.8 327.2L909.5 323.4L924.6 319.8L939.1 316.1L953.1 312.4L967.4 308.9L982.5 305.9L982.6 305.9M-56.7 488.6L-30.8 483.3L-4.9 478.0L28.8 471.7L53.1 466.2L76.7 461.4L100.6 456.7L124.8 451.7L149.1 447.0L173.8 442.4L198.7 437.8L221.8 434.1L241.9 430.8L262.4 427.0L283.3 423.2L304.6 419.1L326.4 415.0L350.9 410.0L375.0 405.3L398.5 400.6L421.6 396.9L443.9 393.2L464.7 389.7L485.4 386.4L505.7 382.7L525.9 378.6L545.9 374.4L565.6 370.4L584.8 366.4L604.0 362.7L622.9 358.6L642.2 354.5L661.3 350.3L680.0 347.4L698.0 345.7L715.8 343.9L733.5 342.2L751.1 340.6L768.5 338.9L785.6 337.3L800.5 335.9L813.7 334.3L827.3 332.9L840.8 330.8L854.3 328.6L868.6 325.8L883.4 322.2L897.8 318.4L912.7 314.9L927.0 311.4L940.7 307.7L954.9 304.3L970.0 301.4L970.1 301.4M-56.4 477.7L-30.4 472.5L-4.4 467.4L30.2 461.2L54.4 455.9L77.9 451.2L101.6 446.7L125.5 441.9L149.8 437.3L174.3 432.9L199.1 428.4L221.8 424.9L241.2 421.7L261.0 418.1L281.3 414.5L302.0 410.6L323.2 406.6L347.4 401.8L371.1 397.3L394.4 392.8L417.1 389.2L439.1 385.6L459.6 382.2L479.9 379.0L499.9 375.5L519.9 371.6L539.6 367.5L559.0 363.7L578.0 359.8L597.0 356.2L615.8 352.3L635.0 348.3L653.9 344.3L672.5 341.6L690.3 339.9L707.9 338.2L725.5 336.6L742.9 335.0L760.2 333.4L777.1 331.9L791.7 330.5L804.4 329.0L817.5 327.6L830.6 325.5L843.7 323.4L857.7 320.7L872.2 317.2L886.4 313.5L901.0 310.2L915.2 306.7L928.7 303.1L942.7 299.9L957.8 297.1L957.9 297.1M-56.1 467.0L-30.0 462.0L-3.9 457.1L31.5 450.9L55.7 445.8L78.9 441.3L102.5 437.0L126.3 432.4L150.4 427.9L174.8 423.7L199.4 419.3L221.8 415.9L240.5 412.9L259.6 409.5L279.3 406.0L299.4 402.2L320.0 398.5L343.9 393.9L367.3 389.5L390.3 385.1L412.8 381.7L434.5 378.2L454.6 374.9L474.5 371.9L494.3 368.5L513.9 364.7L533.4 360.8L552.6 357.1L571.4 353.3L590.2 349.9L608.8 346.1L627.9 342.3L646.7 338.4L665.2 335.8L682.8 334.2L700.3 332.6L717.6 331.1L734.9 329.6L752.1 328.1L768.8 326.6L783.0 325.3L795.3 323.8L808.0 322.5L820.6 320.4L833.3 318.4L847.0 315.8L861.3 312.4L875.2 308.8L889.7 305.6L903.6 302.2L916.9 298.7L930.7 295.5L945.8 292.9L945.9 292.8M-55.8 456.6L-29.6 451.8L-3.4 447.0L32.8 440.9L56.9 436.0L80.0 431.7L103.4 427.5L127.1 423.0L151.0 418.8L175.2 414.6L199.7 410.4L221.7 407.1L239.8 404.2L258.3 401.0L277.4 397.7L296.9 394.1L316.9 390.5L340.5 386.1L363.6 381.9L386.3 377.6L408.5 374.4L430.0 370.9L449.7 367.8L469.3 364.9L488.7 361.6L508.1 358.0L527.4 354.2L546.4 350.7L565.0 347.0L583.6 343.7L602.0 340.1L621.0 336.5L639.7 332.7L658.1 330.2L675.5 328.7L692.8 327.2L710.0 325.7L727.1 324.3L744.2 322.8L760.7 321.4L774.6 320.2L786.4 318.7L798.6 317.5L810.9 315.5L823.2 313.4L836.6 310.9L850.6 307.7L864.3 304.2L878.6 301.0L892.3 297.8L905.4 294.3L919.1 291.2L934.2 288.7L934.2 288.7M-55.5 446.5L-29.2 441.8L-2.9 437.1L34.1 431.2L58.1 426.4L81.1 422.3L104.3 418.3L127.8 413.9L151.6 409.8L175.6 405.8L200.0 401.8L221.7 398.5L239.1 395.8L257.0 392.7L275.5 389.6L294.4 386.2L313.9 382.7L337.2 378.5L360.0 374.5L382.4 370.3L404.4 367.2L425.5 363.9L444.9 360.8L464.2 358.0L483.3 354.9L502.5 351.4L521.5 347.8L540.3 344.4L558.7 340.9L577.2 337.7L595.4 334.2L614.2 330.7L632.8 327.1L651.1 324.8L668.3 323.3L685.5 321.9L702.5 320.5L719.5 319.1L736.4 317.7L752.8 316.4L766.4 315.2L777.7 313.7L789.5 312.6L801.4 310.6L813.3 308.6L826.4 306.2L840.2 303.0L853.6 299.7L867.8 296.6L881.3 293.4L894.2 290.1L907.7 287.1L922.8 284.7L922.9 284.7M-55.2 436.6L-28.8 432.1L-2.4 427.5L35.3 421.7L59.3 417.0L82.1 413.1L105.2 409.2L128.5 405.0L152.2 401.1L176.1 397.2L200.3 393.3L221.7 390.2L238.5 387.6L255.8 384.7L273.6 381.7L292.0 378.4L311.0 375.1L333.9 371.1L356.5 367.2L378.6 363.2L400.3 360.2L421.2 357.0L440.2 354.0L459.2 351.4L478.1 348.3L497.0 345.0L515.7 341.5L534.3 338.3L552.5 334.9L570.8 331.9L588.9 328.4L607.7 325.2L626.1 321.7L644.3 319.5L661.4 318.1L678.3 316.7L695.3 315.4L712.1 314.0L728.9 312.8L745.2 311.4L758.4 310.3L769.3 308.9L780.7 307.8L792.1 305.9L803.7 304.0L816.5 301.6L830.1 298.6L843.3 295.3L857.2 292.3L870.6 289.2L883.2 285.9L896.6 283.0L911.7 280.8L911.8 280.7M-54.9 427.0L-28.4 422.6L-2.0 418.2L36.6 412.4L60.4 407.9L83.1 404.1L106.0 400.4L129.2 396.3L152.7 392.5L176.5 388.8L200.6 385.1L221.7 382.0L237.8 379.6L254.6 376.8L271.9 374.0L289.7 370.9L308.1 367.7L330.8 363.9L353.1 360.2L374.9 356.3L396.4 353.4L417.0 350.3L435.7 347.4L454.4 344.9L472.9 342.0L491.6 338.8L510.1 335.5L528.5 332.3L546.5 329.0L564.7 326.2L582.6 322.8L601.3 319.7L619.6 316.4L637.7 314.3L654.6 312.9L671.4 311.6L688.2 310.4L704.9 309.1L721.5 307.9L737.7 306.6L750.6 305.6L761.0 304.2L772.0 303.1L783.1 301.3L794.3 299.4L806.8 297.2L820.2 294.2L833.2 291.0L846.9 288.1L860.1 285.1L872.6 281.9L885.9 279.1L900.9 276.9L901.0 276.9M-54.6 417.6L-28.0 413.3L-1.6 409.1L37.7 403.4L61.5 399.1L84.0 395.4L106.8 391.9L129.9 387.9L153.3 384.3L176.9 380.7L200.8 377.0L221.6 374.1L237.2 371.8L253.4 369.2L270.1 366.5L287.4 363.5L305.3 360.5L327.7 356.9L349.7 353.3L371.4 349.6L392.6 346.8L412.9 343.8L431.3 341.0L449.7 338.6L468.0 335.8L486.4 332.7L504.7 329.5L522.9 326.5L540.7 323.3L558.7 320.6L576.5 317.4L595.0 314.4L613.3 311.2L631.2 309.2L648.0 308.0L664.6 306.7L681.3 305.5L697.9 304.3L714.4 303.2L730.4 302.0L743.0 300.9L753.0 299.6L763.6 298.6L774.3 296.8L785.1 295.0L797.4 292.8L810.6 289.9L823.3 286.8L836.9 284.1L849.9 281.1L862.2 278.0L875.3 275.2L890.4 273.2L890.4 273.2M-54.3 408.5L-27.7 404.3L-1.1 400.2L38.9 394.6L62.6 390.5L85.0 386.9L107.6 383.5L130.6 379.7L153.8 376.2L177.3 372.7L201.1 369.2L221.6 366.4L236.6 364.2L252.2 361.7L268.4 359.2L285.2 356.4L302.6 353.5L324.7 350.0L346.5 346.6L367.9 343.0L388.8 340.3L409.0 337.4L427.0 334.7L445.1 332.4L463.1 329.7L481.3 326.8L499.4 323.7L517.4 320.9L535.0 317.8L552.9 315.2L570.5 312.1L589.0 309.3L607.1 306.2L625.0 304.3L641.5 303.1L658.1 301.9L674.6 300.8L691.0 299.7L707.4 298.6L723.3 297.4L735.6 296.4L745.2 295.1L755.4 294.2L765.8 292.4L776.2 290.6L788.2 288.6L801.2 285.8L813.7 282.7L827.2 280.1L840.0 277.2L852.1 274.1L865.1 271.5L880.1 269.6L880.2 269.5M-54.0 399.6L-27.4 395.6L-0.7 391.6L40.0 386.0L63.7 382.1L85.9 378.7L108.4 375.4L131.2 371.7L154.3 368.4L177.7 365.0L201.4 361.6L221.6 358.9L236.0 356.8L251.1 354.5L266.8 352.1L283.1 349.4L300.0 346.7L321.8 343.4L343.3 340.1L364.5 336.6L385.2 334.1L405.1 331.2L422.8 328.7L440.6 326.5L458.4 323.9L476.3 321.1L494.2 318.1L512.1 315.4L529.5 312.4L547.2 309.9L564.7 307.0L583.1 304.3L601.1 301.3L618.9 299.5L635.3 298.4L651.7 297.3L668.0 296.2L684.4 295.2L700.7 294.1L716.4 293.0L728.4 292.1L737.6 290.8L747.5 289.9L757.5 288.2L767.6 286.4L779.3 284.4L792.1 281.8L804.4 278.8L817.7 276.2L830.4 273.5L842.3 270.4L855.2 267.8L870.2 266.0L870.2 266.0M-53.8 391.0L-27.0 387.1L-0.3 383.2L41.1 377.7L64.7 373.9L86.8 370.7L109.1 367.5L131.8 364.0L154.8 360.7L178.1 357.5L201.6 354.3L221.6 351.6L235.5 349.7L250.0 347.5L265.2 345.2L281.0 342.6L297.4 340.1L319.0 336.9L340.2 333.8L361.2 330.4L381.7 328.0L401.3 325.2L418.7 322.8L436.3 320.7L453.8 318.2L471.5 315.5L489.2 312.7L506.9 310.0L524.2 307.2L541.8 304.8L559.1 301.9L577.3 299.4L595.3 296.5L612.9 294.9L629.2 293.8L645.5 292.8L661.7 291.8L677.9 290.8L694.1 289.8L709.7 288.7L721.4 287.8L730.2 286.6L739.7 285.7L749.4 284.0L759.2 282.4L770.7 280.4L783.3 277.8L795.4 274.9L808.5 272.5L821.0 269.8L832.7 266.8L845.5 264.3L860.5 262.6L860.6 262.6M-53.5 382.7L-26.7 378.9L0.1 375.1L42.2 369.7L65.7 366.0L87.6 362.9L109.9 359.9L132.4 356.4L155.3 353.3L178.4 350.2L201.9 347.1L221.5 344.5L234.9 342.7L249.0 340.6L263.6 338.5L279.0 336.1L294.9 333.6L316.2 330.7L337.3 327.7L358.0 324.4L378.3 322.1L397.7 319.4L414.8 317.0L432.1 315.0L449.3 312.7L466.9 310.1L484.4 307.4L501.9 304.9L519.0 302.1L536.4 299.9L553.6 297.1L571.8 294.7L589.7 291.9L607.2 290.4L623.3 289.4L639.4 288.4L655.5 287.4L671.6 286.5L687.7 285.6L703.2 284.6L714.6 283.7L723.0 282.5L732.2 281.6L741.6 280.0L751.0 278.4L762.3 276.5L774.7 274.0L786.6 271.2L799.6 268.9L812.0 266.2L823.5 263.3L836.1 260.9L851.1 259.3L851.2 259.2M-53.3 374.6L-26.4 370.9L0.5 367.2L43.2 361.9L66.6 358.4L88.5 355.4L110.6 352.5L133.0 349.1L155.7 346.2L178.8 343.2L202.1 340.2L221.5 337.7L234.4 336.0L247.9 334.0L262.1 332.0L277.0 329.7L292.5 327.4L313.6 324.6L334.4 321.7L354.9 318.6L375.0 316.3L394.1 313.8L411.0 311.5L428.0 309.6L445.0 307.3L462.3 304.8L479.7 302.2L497.0 299.8L513.9 297.2L531.2 295.1L548.3 292.4L566.4 290.1L584.2 287.5L601.6 286.0L617.6 285.1L633.6 284.1L649.6 283.2L665.5 282.4L681.5 281.5L696.8 280.5L708.1 279.7L716.1 278.5L724.9 277.7L734.0 276.2L743.1 274.6L754.2 272.8L766.4 270.4L778.1 267.6L791.0 265.3L803.1 262.8L814.5 259.9L827.1 257.5L842.0 256.0L842.1 256.0M-53.1 366.7L-26.1 363.1L0.8 359.6L44.2 354.3L67.6 350.9L89.3 348.1L111.3 345.3L133.6 342.1L156.2 339.2L179.1 336.4L202.4 333.4L221.5 331.0L233.9 329.4L247.0 327.6L260.7 325.7L275.1 323.6L290.2 321.4L311.0 318.7L331.6 316.0L351.9 312.9L371.8 310.8L390.7 308.3L407.3 306.1L424.1 304.3L440.8 302.1L458.0 299.7L475.1 297.3L492.3 295.0L509.0 292.4L526.2 290.4L543.1 287.8L561.1 285.7L578.9 283.1L596.2 281.8L612.1 280.9L627.9 280.0L643.8 279.2L659.7 278.3L675.5 277.6L690.7 276.6L701.7 275.8L709.4 274.7L717.9 273.9L726.6 272.4L735.5 270.8L746.3 269.1L758.3 266.8L769.8 264.1L782.6 261.9L794.6 259.4L805.8 256.6L818.3 254.3L833.2 252.9L833.2 252.9M-52.8 359.1L-25.8 355.6L1.2 352.2L45.1 347.0L68.5 343.7L90.1 341.0L111.9 338.4L134.2 335.2L156.6 332.5L179.5 329.7L202.6 326.9L221.5 324.6L233.4 323.1L246.0 321.4L259.3 319.6L273.3 317.6L287.9 315.5L308.5 313.0L328.9 310.4L348.9 307.5L368.6 305.4L387.4 303.0L403.7 300.9L420.2 299.2L436.8 297.1L453.7 294.8L470.7 292.5L487.7 290.3L504.3 287.8L521.4 285.9L538.2 283.4L556.1 281.4L573.7 279.0L591.0 277.7L606.7 276.9L622.5 276.0L638.2 275.2L654.0 274.5L669.7 273.7L684.8 272.8L695.5 272.1L702.9 271.0L711.1 270.2L719.5 268.8L728.1 267.2L738.6 265.6L750.5 263.3L761.8 260.7L774.5 258.6L786.4 256.2L797.4 253.4L809.7 251.2L824.7 249.9L824.7 249.9M-52.6 351.8L-25.5 348.4L1.5 345.0L46.0 339.9L69.3 336.8L90.8 334.2L112.6 331.7L134.7 328.6L157.1 326.0L179.8 323.4L202.8 320.6L221.4 318.4L232.9 317.0L245.1 315.4L257.9 313.8L271.5 311.8L285.7 309.9L306.1 307.5L326.3 305.0L346.1 302.2L365.6 300.2L384.2 297.9L400.2 295.8L416.5 294.2L432.9 292.2L449.6 290.1L466.4 287.8L483.3 285.7L499.7 283.4L516.7 281.5L533.4 279.1L551.2 277.2L568.7 274.9L585.9 273.7L601.5 272.9L617.2 272.2L632.8 271.4L648.4 270.7L664.1 270.0L679.1 269.2L689.6 268.5L696.6 267.4L704.5 266.7L712.6 265.2L720.9 263.8L731.3 262.2L743.0 260.0L754.1 257.4L766.6 255.4L778.4 253.0L789.3 250.3L801.5 248.2L816.4 247.0L816.5 246.9M-52.4 344.7L-25.2 341.4L1.9 338.1L46.9 333.1L70.2 330.1L91.5 327.6L113.2 325.2L135.2 322.2L157.5 319.7L180.1 317.2L203.0 314.6L221.4 312.4L232.4 311.1L244.2 309.6L256.6 308.1L269.8 306.3L283.6 304.4L303.8 302.2L323.7 299.8L343.4 297.1L362.7 295.2L381.1 293.0L396.9 291.0L413.0 289.4L429.1 287.5L445.7 285.5L462.3 283.3L479.0 281.3L495.3 279.1L512.2 277.3L528.7 275.0L546.5 273.2L563.9 271.0L581.1 269.9L596.5 269.2L612.0 268.5L627.6 267.8L643.1 267.1L658.7 266.5L673.6 265.6L683.8 265.0L690.5 263.9L698.1 263.2L705.9 261.8L714.0 260.4L724.1 258.9L735.7 256.8L746.7 254.3L759.0 252.3L770.7 250.0L781.4 247.4L793.5 245.3L808.5 244.1L808.5 244.1M-52.2 337.8L-25.0 334.7L2.2 331.5L47.8 326.5L71.0 323.6L92.2 321.2L113.8 318.9L135.7 316.1L157.9 313.7L180.4 311.2L203.2 308.7L221.4 306.6L232.0 305.4L243.3 304.1L255.3 302.6L268.1 300.9L281.6 299.2L301.5 297.1L321.3 294.8L340.8 292.2L359.9 290.4L378.1 288.2L393.6 286.3L409.5 284.8L425.5 283.0L441.8 281.0L458.3 279.0L474.9 277.1L491.1 274.9L507.8 273.3L524.2 271.1L541.9 269.3L559.3 267.2L576.3 266.2L591.7 265.5L607.1 264.9L622.5 264.2L638.0 263.6L653.5 263.0L668.3 262.2L678.3 261.6L684.6 260.5L692.0 259.9L699.5 258.6L707.3 257.2L717.3 255.7L728.7 253.7L739.5 251.2L751.7 249.3L763.2 247.1L773.8 244.5L785.9 242.5L800.8 241.4L800.8 241.4M-52.0 331.2L-24.7 328.2L2.5 325.1L48.6 320.1L71.8 317.4L92.9 315.1L114.4 312.9L136.2 310.2L158.3 307.9L180.7 305.5L203.4 303.1L221.4 301.1L231.6 299.9L242.5 298.7L254.1 297.3L266.5 295.8L279.6 294.1L299.4 292.2L319.0 289.9L338.3 287.4L357.3 285.7L375.2 283.6L390.5 281.7L406.2 280.4L422.0 278.6L438.2 276.8L454.5 274.8L470.9 273.0L487.0 270.9L503.6 269.4L519.9 267.2L537.5 265.6L554.9 263.6L571.8 262.7L587.1 262.0L602.4 261.4L617.7 260.8L633.1 260.2L648.4 259.7L663.1 258.9L672.9 258.3L679.0 257.3L686.0 256.7L693.3 255.4L700.9 254.0L710.7 252.6L721.9 250.7L732.6 248.3L744.7 246.5L756.1 244.3L766.5 241.7L778.5 239.8L793.4 238.8L793.4 238.8M-51.8 324.9L-24.5 321.9L2.8 318.9L49.4 314.0L72.5 311.4L93.6 309.2L114.9 307.1L136.6 304.5L158.6 302.3L180.9 300.0L203.6 297.6L221.4 295.7L231.1 294.7L241.7 293.5L252.9 292.3L265.0 290.8L277.8 289.3L297.3 287.4L316.7 285.3L335.8 282.9L354.7 281.2L372.5 279.2L387.6 277.4L403.0 276.1L418.6 274.5L434.6 272.7L450.8 270.8L467.1 269.1L483.0 267.1L499.6 265.6L515.8 263.6L533.3 262.0L550.6 260.1L567.5 259.3L582.6 258.7L597.8 258.1L613.0 257.5L628.3 257.0L643.6 256.5L658.2 255.8L667.8 255.2L673.6 254.2L680.4 253.7L687.4 252.4L694.7 251.0L704.3 249.7L715.4 247.8L725.9 245.5L738.0 243.7L749.2 241.6L759.5 239.1L771.4 237.2L786.3 236.3L786.3 236.2M-51.6 318.8L-24.2 315.9L3.1 313.0L50.2 308.2L73.3 305.7L94.2 303.5L115.5 301.5L137.1 299.0L159.0 296.9L181.2 294.7L203.8 292.4L221.3 290.6L230.7 289.6L240.9 288.6L251.8 287.4L263.5 286.0L275.9 284.6L295.3 282.9L314.5 280.8L333.5 278.5L352.2 276.9L369.8 275.0L384.7 273.2L400.0 272.0L415.4 270.4L431.2 268.7L447.3 266.9L463.5 265.3L479.3 263.4L495.7 262.0L511.8 260.0L529.3 258.6L546.5 256.8L563.3 256.0L578.3 255.4L593.4 254.9L608.6 254.4L623.7 253.9L639.0 253.4L653.5 252.7L662.9 252.2L668.3 251.2L674.9 250.7L681.7 249.5L688.8 248.2L698.2 246.9L709.2 245.0L719.5 242.8L731.5 241.1L742.6 239.0L752.8 236.5L764.6 234.7L779.4 233.8L779.5 233.8" fill="none" stroke="#121e24" stroke-width="0.85" stroke-opacity="0.8" /></g><path d="M-60.0 314.0L543.0 253.6L600.0 252.0L657.0 249.8L690.0 245.0L729.0 238.0L755.0 233.0L775.0 231.4L790.0 235.5L806.0 240.8L851.7 259.0L880.0 269.3L1093.0 345.0M-60.0 598.0L-5.0 583.0L44.0 568.5L80.0 559.5L140.0 544.4L200.0 530.4L240.0 523.6L300.0 511.5L360.0 498.9L380.0 493.6L440.0 479.4L470.0 473.6L505.0 466.8L528.0 462.6L540.0 460.2L570.0 453.8L614.0 442.6L688.0 424.0L745.7 407.6L860.0 393.0L925.0 386.0L935.0 384.5L970.0 379.0L1093.0 345.0" fill="none" stroke="#121e24" stroke-width="0.85" stroke-opacity="0.7" /><polygon points="219.6,372.0 305.0,372.0 306.4,395.8 226.6,403.6" fill="#ff0000" /><polygon points="212.6,372.0 219.6,372.0 226.6,403.6 216.8,405.0" fill="#3a0a14" /><polygon points="305.0,372.0 308.0,372.0 311.0,396.5 306.4,395.8" fill="#ff8a00" /><polygon points="361.0,372.0 449.0,372.0 449.0,382.6 418.5,384.0 365.0,389.6" fill="#ff0000" /><polygon points="418.5,372.0 433.0,372.0 433.0,383.3 418.5,384.0" fill="#ff5a00" /><path d="M242.0 372.0L246.0 402.0M269.0 372.0L273.0 402.0M293.0 372.0L297.0 402.0M384.0 372.0L386.0 388.0M404.0 372.0L406.0 388.0M420.0 372.0L420.0 384.0M422.6 372.0L422.6 384.0M425.2 372.0L425.2 384.0M427.8 372.0L427.8 384.0M430.4 372.0L430.4 384.0M433.0 372.0L433.0 384.0M435.6 372.0L435.6 384.0M438.2 372.0L438.2 384.0M440.8 372.0L440.8 384.0M443.4 372.0L443.4 384.0M446.0 372.0L446.0 384.0M448.6 372.0L448.6 384.0M219.0 388.0L306.0 382.0M311.0 396.6L365.0 389.6L362.0 372.0M316.0 392.0L361.0 386.0M318.0 372.0L321.0 395.0M355.0 372.0L359.0 390.0" fill="none" stroke="#121e24" stroke-width="0.85" stroke-opacity="0.8" /><path d="M571.0 297.0L577.0 294.5L583.0 297.0L577.0 299.5L571.0 297.0M638.0 345.0L644.0 342.5L650.0 345.0L644.0 347.5L638.0 345.0M717.0 277.0L723.0 274.5L729.0 277.0L723.0 279.5L717.0 277.0M802.0 318.0L808.0 315.5L814.0 318.0L808.0 320.5L802.0 318.0M220.0 520.0L226.0 517.5L232.0 520.0L226.0 522.5L220.0 520.0M512.0 462.0L518.0 459.5L524.0 462.0L518.0 464.5L512.0 462.0" fill="none" stroke="#121e24" stroke-width="0.85" stroke-opacity="0.7" /><path d="M215.0 523.5L237.0 518.0M217.0 518.0L235.0 524.0M509.0 463.5L524.0 458.0M510.0 458.0L524.0 463.0" fill="none" stroke="#ff8a30" stroke-width="0.8" stroke-opacity="0.75" /></svg>
<!-- tooltip -->
<div id="tip"><div style="top:3px">NODE(581)</div><div style="top:17.8px;word-spacing:1.9px">UX = 66; UY = 2.94; UZ = -0.105;</div><div style="top:32.7px">RX = -7.04E-5; RY = 0.00186; RZ = 0.000183</div></div>
<div id="hl"></div>

<!-- dialog -->
<div id="dlg">
  <div class="title">Visualization</div>
  <svg class="close" width="12" height="12" viewBox="0 0 12 12"><path d="M1 1L11 11M11 1L1 11" stroke="#6e6e6e" stroke-width="1" fill="none"/></svg>
  <div class="client">
   <div class="inner"></div>
   <div class="list" style="top:1px;left:1px">
     <div class="sel"></div>
     <div class="item" style="top:9px">Analysis Model</div>
     <div class="item" style="top:36px;color:#4a4a58">Deformation</div>
     <div class="item" style="top:63px">Loads</div>
     <div class="item" style="top:90px">Frame Results</div>
     <div class="item" style="top:117px">Shearwall Results</div>
     <div class="item" style="top:144px">Purlin Results</div>
     <div class="item" style="top:171px">Foundation Results</div>
     <div class="item" style="top:198px">Shell Results</div>
     <div class="item" style="top:225px">Concrete Design</div>
     <div class="item" style="top:252px">Steel Design</div>
   </div>
   <div class="split"></div>
  </div>
</div>
<!-- dialog controls (page coords) -->
<div id="ctl">
  <div class="cb" style="left:167px;top:44px"><svg width="11" height="11" viewBox="0 0 11 11" style="display:block"><path d="M1.5 5.5L4.3 8.3L9.6 2.6" stroke="#222" stroke-width="1.1" fill="none"/></svg></div>
  <div class="lbl" style="left:183px;top:44px">Show nodes and links</div>
  <div class="cb" style="left:183px;top:62px"></div>
  <div class="lbl" style="left:199.6px;top:62px">Show node numbers</div>
  <div class="cb" style="left:167px;top:83px"><svg width="11" height="11" viewBox="0 0 11 11" style="display:block"><path d="M1.5 5.5L4.3 8.3L9.6 2.6" stroke="#222" stroke-width="1.1" fill="none"/></svg></div>
  <div class="lbl" style="left:183px;top:83px">Show supports</div>
  <div class="cb" style="left:167px;top:101px"><svg width="11" height="11" viewBox="0 0 11 11" style="display:block"><path d="M1.5 5.5L4.3 8.3L9.6 2.6" stroke="#222" stroke-width="1.1" fill="none"/></svg></div>
  <div class="lbl" style="left:183px;top:101px">Extrude elements</div>
  <div class="cb" style="left:167px;top:119px"></div>
  <div class="lbl" style="left:183px;top:119px">Use hotspot scale</div>
  <div class="cb" style="left:167px;top:137px"></div>
  <div class="lbl" style="left:183px;top:137px">Show element end releases</div>
  <div class="cb" style="left:167px;top:155px"></div>
  <div class="lbl" style="left:183px;top:155px">Manual scale factor :</div>

  <div class="grp" style="left:335px;top:50px;width:195px;height:89px"><div class="cap" style="left:6px">Displacement component to view :</div></div>
  <div class="rb" style="left:344px;top:66px"><div style="position:absolute;left:2px;top:2px;width:7px;height:7px;border-radius:50%;background:#222"></div></div>
  <div class="lbl" style="left:360.5px;top:66px;font-size:11px">U (total)</div>
  <div class="rb" style="left:344px;top:83px"></div>
  <div class="lbl" style="left:360.5px;top:83px">UX</div>
  <div class="rb" style="left:344px;top:101px"></div>
  <div class="lbl" style="left:360.5px;top:101px">UY</div>
  <div class="rb" style="left:344px;top:119px"></div>
  <div class="lbl" style="left:360.5px;top:119px">UZ</div>

  <div class="abs" style="left:335px;top:151px;width:195px;height:21px;border:1px solid #b4b4b4;background:#fff"></div>
  <div class="lbl" style="left:341.5px;top:154.5px;color:#6d6d6d">44</div>

  <div class="grp" style="left:164px;top:188px;width:366px;height:87px"><div class="cap" style="left:6px">Case/combination to view :</div></div>
  <div class="abs" style="left:174px;top:201px;width:343px;height:19px;border:1px solid #adadad;background:#e1e1e1"></div>
  <div class="lbl" style="left:178.5px;top:205px">FX+</div>
  <svg class="abs" style="left:504px;top:208.3px" width="12" height="8" viewBox="0 0 12 8"><path d="M1.5 1.5L6 6L10.5 1.5" stroke="#444" stroke-width="1" fill="none"/></svg>
  <div class="abs" style="left:421px;top:225px;width:95px;height:19px;border:1px solid #adadad;background:#e1e1e1"></div>
  <div class="lbl" style="left:422px;top:228.8px;width:97px;text-align:center">Animate</div>
  <div class="lbl" style="left:173.5px;top:256px">Equivalent static loading for irregularity check</div>
</div>

<!-- frame lines -->
<svg class="abs" style="left:0;top:0" width="1187" height="571" viewBox="0 0 1187 571">
  <rect x="0" y="0" width="1187" height="3" fill="#c9ced9"/>
  <rect x="543" y="3" width="644" height="2" fill="#cdd2dc"/>
  <rect x="596" y="0" width="172" height="1.5" fill="#b9bec9"/>
  <rect x="0" y="4" width="596" height="1" fill="#000"/>
  <rect x="596" y="5" width="591" height="1" fill="#000"/>
  <rect x="1185" y="5" width="1" height="566" fill="#000"/>
  <rect x="1186" y="5" width="1" height="566" fill="#fff"/>
  <rect x="0" y="3" width="1" height="302" fill="#fff"/><rect x="0" y="305" width="1" height="15" fill="#ff0000"/>
  <line x1="0.6" y1="2.5" x2="1.5" y2="571" stroke="#000" stroke-width="1.25"/>
  <line x1="0" y1="568.5" x2="1187" y2="570.5" stroke="#000" stroke-width="1.3"/>
</svg>
</body></html>
